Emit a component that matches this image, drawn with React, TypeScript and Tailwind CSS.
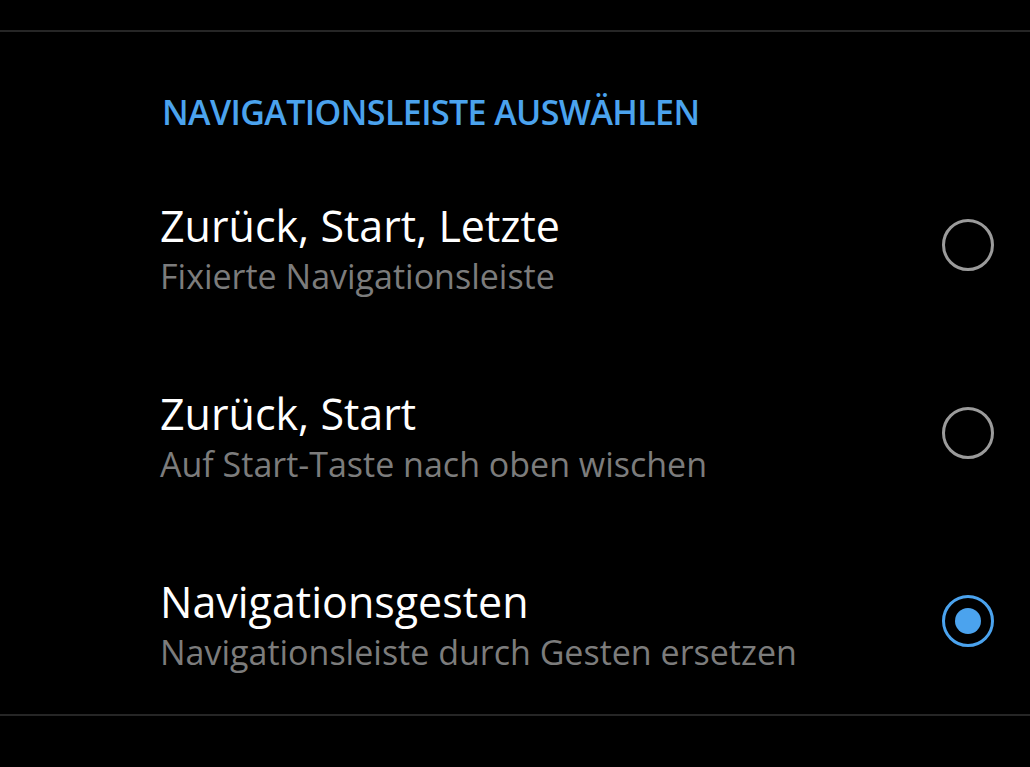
import { useState } from "react";

const options = [
  { key: "three", title: "Zurück, Start, Letzte", sub: "Fixierte Navigationsleiste" },
  { key: "two", title: "Zurück, Start", sub: "Auf Start-Taste nach oben wischen" },
  { key: "gesture", title: "Navigationsgesten", sub: "Navigationsleiste durch Gesten ersetzen" },
];

function Radio({ checked }: { checked: boolean }) {
  return (
    <div
      className={
        checked
          ? "flex h-[52px] w-[52px] items-center justify-center rounded-full border-[3px] border-[#4ba3ee]"
          : "flex h-[52px] w-[52px] items-center justify-center rounded-full border-[3px] border-[#9b9b9b]"
      }
    >
      {checked && <div className="h-[26px] w-[26px] rounded-full bg-[#4ba3ee]" />}
    </div>
  );
}

export default function App() {
  const [selected, setSelected] = useState("gesture");

  return (
    <div
      className="h-[767px] w-[1030px] overflow-hidden bg-black"
      style={{ fontFamily: '"Open Sans", "Noto Sans", sans-serif' }}
    >
      <div className="h-[30px]" />
      <div className="border-y-2 border-[#262626]">
        <p className="pl-[162px] pt-[60px] text-[34px] font-semibold leading-[40px] tracking-[-0.6px] text-[#4ba3ee]">
          NAVIGATIONSLEISTE AUSWÄHLEN
        </p>

        <div className="mt-[18px] flex flex-col">
          {options.map((o) => (
            <button
              key={o.key}
              onClick={() => setSelected(o.key)}
              className="flex h-[188px] items-start justify-between pb-[40px] pl-[160px] pr-[36px] pt-[50px] text-left"
            >
              <div>
                <div className="text-[43px] leading-[52px] text-white">{o.title}</div>
                <div className="mt-[2px] text-[34px] leading-[44px] text-[#7c7c7c]">{o.sub}</div>
              </div>
              <div className="mt-[19px]">
                <Radio checked={selected === o.key} />
              </div>
            </button>
          ))}
        </div>
      </div>
    </div>
  );
}
